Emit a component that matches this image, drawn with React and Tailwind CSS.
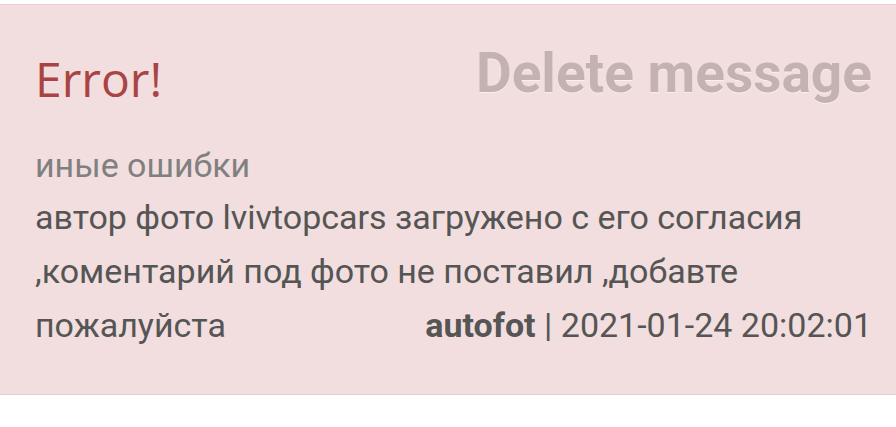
export default function App() {
  return (
    <div className="bg-white min-h-screen pt-[4px]" style={{ fontFamily: "Roboto, sans-serif" }}>
      <div className="bg-[#f2dede] border-y border-[#ebccd1] pl-[35px] pr-[24px] pt-[40px] h-[391px]">
        {/* Header */}
        <div className="flex items-start justify-between">
          <h4
            className="text-[#a94442] text-[48px] leading-[56px] mt-[6px]"
            style={{ fontFamily: "'Open Sans', sans-serif" }}
          >
            Error!
          </h4>
          <button
            className="text-[55px] leading-[64px] font-bold text-[#c4b2b3] -mt-[4px]"
            style={{ textShadow: "0 1px 0 rgba(255,255,255,0.5)" }}
          >
            Delete message
          </button>
        </div>

        {/* Body */}
        <div className="mt-[33px] text-[34px] leading-[54px] text-[#555]">
          <p className="text-[#808080] leading-[50px]">иные ошибки</p>
          <p>
            автор фото lvivtopcars загружено с его согласия ,коментарий под фото не поставил ,добавте пожалуйста
            <span className="float-right">
              <b>autofot</b> | 2021-01-24 20:02:01
            </span>
          </p>
        </div>
      </div>
    </div>
  )
}
